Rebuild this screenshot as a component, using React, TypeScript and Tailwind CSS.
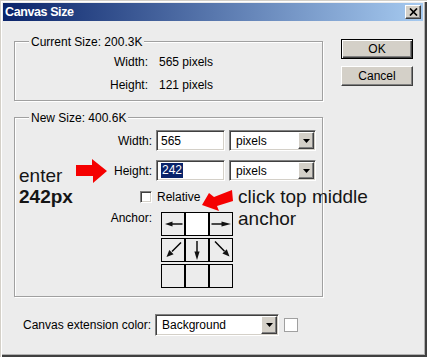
import React from 'react';

// classic win2k bevels
const raised =
  'bg-[#d4d0c8] border border-t-white border-l-white border-r-[#404040] border-b-[#404040] shadow-[inset_-1px_-1px_0_#808080]';
const sunken =
  'bg-white border border-t-[#808080] border-l-[#808080] border-r-white border-b-white shadow-[inset_1px_1px_0_#404040,inset_-1px_-1px_0_#d4d0c8]';

const GroupBox: React.FC<{ title: string; className?: string; children: React.ReactNode }> = ({
  title,
  className = '',
  children,
}) => (
  <div className={`relative border border-[#a0a0a0] shadow-[inset_1px_1px_0_#fff,1px_1px_0_#fff] ${className}`}>
    <span className="absolute left-[14px] top-[-7px] px-[2px] leading-[14px] bg-[#ececec]">{title}</span>
    {children}
  </div>
);

const DropDown: React.FC<{ value: string; className?: string }> = ({ value, className = '' }) => (
  <div className={`${sunken} flex items-stretch p-[1px] ${className}`}>
    <span className="flex-1 flex items-center pl-[5px]">{value}</span>
    <span className={`${raised} w-[16px] flex items-center justify-center`}>
      <svg width="7" height="4" viewBox="0 0 7 4">
        <polygon points="0,0 7,0 3.5,4" fill="#000" />
      </svg>
    </span>
  </div>
);

type Dir = 'l' | 'r' | 'd' | 'dl' | 'dr' | null;

const AnchorArrow: React.FC<{ dir: Dir }> = ({ dir }) => {
  if (!dir) return null;
  return (
    <svg className="absolute -inset-px" width="24" height="24" viewBox="0 0 24 24">
      {dir === 'l' && (
        <>
          <path d="M10 12H21.5" stroke="#000" strokeWidth="1.4" />
          <polygon points="4,12 11.5,9.4 11.5,14.6" fill="#111" />
        </>
      )}
      {dir === 'r' && (
        <>
          <path d="M2.5 12H14" stroke="#000" strokeWidth="1.4" />
          <polygon points="22,12 12.5,9.4 12.5,14.6" fill="#111" />
        </>
      )}
      {dir === 'd' && (
        <>
          <path d="M12 3V15" stroke="#000" strokeWidth="1.4" />
          <polygon points="12,22 9.4,13.5 14.6,13.5" fill="#111" />
        </>
      )}
      {dir === 'dl' && (
        <>
          <path d="M20 4.5L11 13.5" stroke="#000" strokeWidth="1.4" />
          <polygon points="5.5,19 12.6,16.2 8.3,11.9" fill="#111" />
        </>
      )}
      {dir === 'dr' && (
        <>
          <path d="M6 3.5L15.5 13.3" stroke="#000" strokeWidth="1.4" />
          <polygon points="20.5,18.5 13.4,15.6 17.8,11.3" fill="#111" />
        </>
      )}
    </svg>
  );
};

const anchorRows: Dir[][] = [
  ['l', null, 'r'],
  ['dl', 'd', 'dr'],
  [null, null, null],
];

export default function App() {
  return (
    <div className="relative w-[427px] h-[357px] bg-[#ececec] pt-[3px] pl-[3px] pr-[4px] pb-[4px] text-[12px] text-black font-['Liberation_Sans',Arial,sans-serif] shadow-[inset_1px_1px_0_#d4d0c8,inset_2px_2px_0_#fff,inset_-2px_-2px_0_#404040,inset_-3px_-3px_0_#b0b0b0]">
      {/* Title bar */}
      <div className="flex items-center h-[18px] bg-[linear-gradient(to_right,#0a246a,#a6caf0)]">
        <span className="pl-[2px] text-white font-bold text-[12.5px] tracking-[-0.4px]">Canvas Size</span>
        <button className={`${raised} ml-auto mr-[2px] w-[16px] h-[14px] flex items-center justify-center`}>
          <svg width="9" height="8" viewBox="0 0 9 8">
            <path d="M1 0.5L8 7.5M8 0.5L1 7.5" stroke="#000" strokeWidth="1.7" />
          </svg>
        </button>
      </div>

      <div className="flex">
        {/* Left column */}
        <div className="ml-[11px] w-[309px] pt-[20px]">
          <GroupBox title="Current Size: 200.3K" className="h-[60px]">
            <div className="pt-[8px]">
              <div className="flex items-center h-[23px]">
                <span className="w-[133px] text-right">Width:</span>
                <span className="ml-[11px]">565 pixels</span>
              </div>
              <div className="flex items-center h-[23px]">
                <span className="w-[133px] text-right">Height:</span>
                <span className="ml-[11px]">121 pixels</span>
              </div>
            </div>
          </GroupBox>

          <GroupBox title="New Size: 400.6K" className="mt-[16px] h-[180px]">
            <div className="flex flex-col gap-[9px] pt-[12px]">
              <div className="flex items-center h-[21px]">
                <span className="w-[137px] text-right">Width:</span>
                <div className={`${sunken} ml-[4px] w-[69px] h-[21px] flex items-center pl-[4px]`}>565</div>
                <DropDown value="pixels" className="ml-[4px] w-[87px] h-[21px]" />
              </div>
              <div className="flex items-center h-[21px]">
                <span className="w-[137px] text-right">Height:</span>
                <div className={`${sunken} ml-[4px] w-[69px] h-[21px] flex items-center pl-[4px]`}>
                  <span className="bg-[#0a246a] text-white leading-[15px] px-[1px]">242</span>
                </div>
                <DropDown value="pixels" className="ml-[4px] w-[87px] h-[21px]" />
              </div>
              <div className="flex items-center h-[13px] pl-[125px]">
                <span className={`${sunken} w-[12px] h-[12px]`} />
                <span className="ml-[5px]">Relative</span>
              </div>
              <div className="flex items-start">
                <span className="w-[137px] text-right leading-[13px]">Anchor:</span>
                <div className="ml-[9px] flex flex-col gap-[2px]">
                  {anchorRows.map((row, i) => (
                    <div key={i} className="flex">
                      {row.map((dir, j) => (
                        <div
                          key={j}
                          className={`relative w-[24px] h-[24px] border border-black ${
                            i === 0 && j === 1 ? 'bg-white' : 'bg-[#ececec]'
                          }`}
                        >
                          <AnchorArrow dir={dir} />
                        </div>
                      ))}
                    </div>
                  ))}
                </div>
              </div>
            </div>
          </GroupBox>

          <div className="mt-[17px] h-[22px] flex items-center pl-[9px]">
            <span className="w-[132px]">Canvas extension color:</span>
            <DropDown value="Background" className="w-[124px] h-[22px]" />
            <span className="ml-[5px] w-[14px] h-[14px] border border-[#a0a0a0] bg-white" />
          </div>
        </div>

        {/* Buttons */}
        <div className="ml-[18px] w-[72px] pt-[18px] flex flex-col gap-[7px]">
          <button className="h-[20px] bg-[#d4d0c8] border border-black shadow-[inset_1px_1px_0_#fff,inset_-1px_-1px_0_#404040,inset_-2px_-2px_0_#808080]">
            OK
          </button>
          <button className={`${raised} h-[20px]`}>Cancel</button>
        </div>
      </div>

      {/* Annotations drawn over the dialog */}
      <div className="absolute left-[19px] top-[165px] text-[19px] leading-[21px] text-[#151515]">
        enter
        <br />
        <b>242px</b>
      </div>
      <div className="absolute left-[238px] top-[186px] text-[19px] leading-[22px] text-[#151515]">
        click top middle
        <br />
        anchor
      </div>
      <svg className="absolute inset-0 pointer-events-none" width="427" height="357">
        <polygon fill="#f50000" points="76,165 92,165 92,159 107,171 93,183 93,176 76,176" />
        <polygon fill="#f50000" points="202,205 209,193 214,197 232,190 233,201 217,206 219,211" />
      </svg>
    </div>
  );
}
